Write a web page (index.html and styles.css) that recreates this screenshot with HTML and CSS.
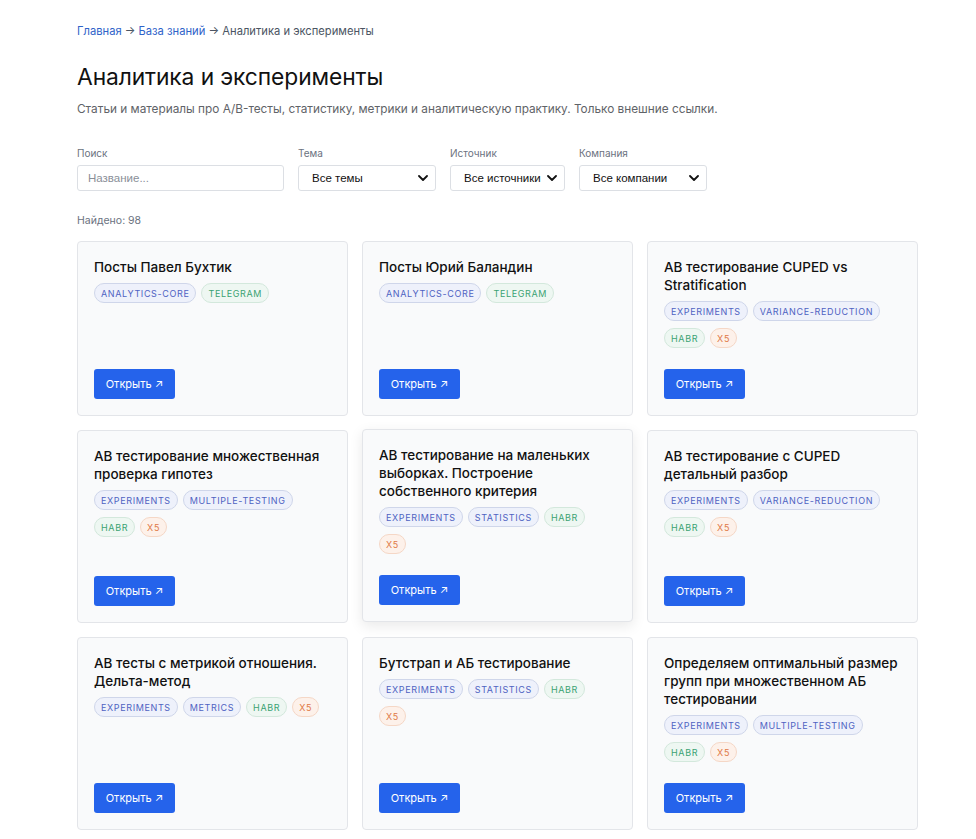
FILE: index.html
```html
<!DOCTYPE html>
<html lang="ru">
<head>
<meta charset="utf-8">
<title>Аналитика и эксперименты</title>
<link rel="stylesheet" href="styles.css">
</head>
<body>
<main class="page">
  <nav class="breadcrumb"><a href="#">Главная</a> → <a href="#">База знаний</a> → <span>Аналитика и эксперименты</span></nav>
  <h1 class="title">Аналитика и эксперименты</h1>
  <p class="subtitle">Статьи и материалы про A/B-тесты, статистику, метрики и аналитическую практику. Только внешние ссылки.</p>

  <div class="filters">
    <label class="field f-search"><span class="label">Поиск</span>
      <input class="input" type="text" placeholder="Название...">
    </label>
    <label class="field f-topic"><span class="label">Тема</span>
      <span class="select-wrap"><select class="select"><option>Все темы</option></select>
        <svg class="chev" viewBox="0 0 10 6" width="10" height="6"><path d="M1 1l4 4 4-4" fill="none" stroke="#111" stroke-width="1.8" stroke-linecap="round" stroke-linejoin="round"/></svg></span>
    </label>
    <label class="field f-source"><span class="label">Источник</span>
      <span class="select-wrap"><select class="select"><option>Все источники</option></select>
        <svg class="chev" viewBox="0 0 10 6" width="10" height="6"><path d="M1 1l4 4 4-4" fill="none" stroke="#111" stroke-width="1.8" stroke-linecap="round" stroke-linejoin="round"/></svg></span>
    </label>
    <label class="field f-company"><span class="label">Компания</span>
      <span class="select-wrap"><select class="select"><option>Все компании</option></select>
        <svg class="chev" viewBox="0 0 10 6" width="10" height="6"><path d="M1 1l4 4 4-4" fill="none" stroke="#111" stroke-width="1.8" stroke-linecap="round" stroke-linejoin="round"/></svg></span>
    </label>
  </div>

  <p class="found">Найдено: 98</p>

  <section class="grid">
    <article class="card">
      <h3 class="card-title">Посты Павел Бухтик</h3>
      <div class="tags"><span class="tag blue">ANALYTICS-CORE</span><span class="tag green">TELEGRAM</span></div>
      <a class="btn" href="#">Открыть ↗</a>
    </article>
    <article class="card">
      <h3 class="card-title">Посты Юрий Баландин</h3>
      <div class="tags"><span class="tag blue">ANALYTICS-CORE</span><span class="tag green">TELEGRAM</span></div>
      <a class="btn" href="#">Открыть ↗</a>
    </article>
    <article class="card">
      <h3 class="card-title">AB тестирование CUPED vs Stratification</h3>
      <div class="tags"><span class="tag blue">EXPERIMENTS</span><span class="tag blue">VARIANCE-REDUCTION</span><span class="tag green">HABR</span><span class="tag orange">X5</span></div>
      <a class="btn" href="#">Открыть ↗</a>
    </article>
    <article class="card">
      <h3 class="card-title">AB тестирование множественная проверка гипотез</h3>
      <div class="tags"><span class="tag blue">EXPERIMENTS</span><span class="tag blue">MULTIPLE-TESTING</span><span class="tag green">HABR</span><span class="tag orange">X5</span></div>
      <a class="btn" href="#">Открыть ↗</a>
    </article>
    <article class="card hover">
      <h3 class="card-title">AB тестирование на маленьких выборках. Построение собственного критерия</h3>
      <div class="tags"><span class="tag blue">EXPERIMENTS</span><span class="tag blue">STATISTICS</span><span class="tag green">HABR</span><span class="tag orange">X5</span></div>
      <a class="btn" href="#">Открыть ↗</a>
    </article>
    <article class="card">
      <h3 class="card-title">AB тестирование с CUPED детальный разбор</h3>
      <div class="tags"><span class="tag blue">EXPERIMENTS</span><span class="tag blue">VARIANCE-REDUCTION</span><span class="tag green">HABR</span><span class="tag orange">X5</span></div>
      <a class="btn" href="#">Открыть ↗</a>
    </article>
    <article class="card">
      <h3 class="card-title">AB тесты с метрикой отношения. Дельта-метод</h3>
      <div class="tags"><span class="tag blue">EXPERIMENTS</span><span class="tag blue">METRICS</span><span class="tag green">HABR</span><span class="tag orange">X5</span></div>
      <a class="btn" href="#">Открыть ↗</a>
    </article>
    <article class="card">
      <h3 class="card-title">Бутстрап и АБ тестирование</h3>
      <div class="tags"><span class="tag blue">EXPERIMENTS</span><span class="tag blue">STATISTICS</span><span class="tag green">HABR</span><span class="tag orange">X5</span></div>
      <a class="btn" href="#">Открыть ↗</a>
    </article>
    <article class="card">
      <h3 class="card-title">Определяем оптимальный размер групп при множественном АБ тестировании</h3>
      <div class="tags"><span class="tag blue">EXPERIMENTS</span><span class="tag blue">MULTIPLE-TESTING</span><span class="tag green">HABR</span><span class="tag orange">X5</span></div>
      <a class="btn" href="#">Открыть ↗</a>
    </article>
  </section>
</main>
</body>
</html>
```

FILE: styles.css
```css
* { box-sizing: border-box; }

html, body {
  margin: 0;
  padding: 0;
  background: #ffffff;
}

body {
  font-family: Inter, "Noto Sans", "Liberation Sans", sans-serif;
  color: #111827;
}

.page {
  width: 841px;
  margin-left: 77px;
  padding-top: 23px;
}

.breadcrumb {
  font-size: 11.2px;
  line-height: 16px;
  color: #4b5563;
}

.breadcrumb a {
  color: #2f63c9;
  text-decoration: none;
}

.title {
  margin: 24px 0 0;
  font-size: 22.8px;
  line-height: 28px;
  font-weight: 400;
  color: #111111;
  letter-spacing: -0.1px;
}

.subtitle {
  margin: 10px 0 0;
  font-size: 11.8px;
  line-height: 16px;
  color: #5f6368;
}

.filters {
  display: flex;
  gap: 14px;
  margin-top: 29px;
}

.field {
  display: flex;
  flex-direction: column;
  gap: 5px;
}

.label {
  font-size: 10px;
  line-height: 14px;
  color: #6b7280;
}

.f-search { width: 207px; }
.f-topic { width: 138px; }
.f-source { width: 115px; }
.f-company { width: 128px; }

.input,
.select {
  width: 100%;
  height: 26px;
  border: 1px solid #dcdfe4;
  border-radius: 3px;
  background: #ffffff;
  font-family: "Liberation Sans", Arial, sans-serif;
  font-size: 11.5px;
  color: #111111;
}

.input {
  padding: 0 10px;
}

.input::placeholder {
  color: #8a8f98;
}

.select-wrap {
  position: relative;
  display: block;
}

.select {
  appearance: none;
  -webkit-appearance: none;
  padding: 0 22px 0 13px;
}

.chev {
  position: absolute;
  right: 8px;
  top: 10px;
  pointer-events: none;
}

.found {
  margin: 23px 0 0;
  font-size: 10.5px;
  line-height: 14px;
  color: #6b7280;
}

.grid {
  display: grid;
  grid-template-columns: repeat(3, 1fr);
  gap: 14px;
  margin-top: 13px;
}

.card {
  display: flex;
  flex-direction: column;
  align-items: flex-start;
  background: #f9fafb;
  border: 1px solid #e3e5e9;
  border-radius: 4px;
  padding: 16px 16px 16px;
}

.card.hover {
  transform: translateY(-1px);
  box-shadow: 0 4px 14px rgba(0, 0, 0, 0.09);
}

.card-title {
  margin: 0;
  font-size: 13.5px;
  line-height: 18px;
  font-weight: 500;
  color: #111111;
}

.tags {
  display: flex;
  flex-wrap: wrap;
  gap: 7px 5px;
  margin-top: 7px;
  margin-bottom: 21px;
}

.tag {
  display: inline-flex;
  align-items: center;
  height: 20px;
  padding: 0 6px;
  border: 1px solid;
  border-radius: 10px;
  font-size: 9px;
  letter-spacing: 0.07em;
  font-weight: 400;
}

.tag.blue {
  background: #eef1fb;
  border-color: #cfd6ea;
  color: #4f63c2;
}

.tag.green {
  background: #eef7f2;
  border-color: #d3e8dc;
  color: #3aa272;
}

.tag.orange {
  background: #fdf1ea;
  border-color: #f5d7c6;
  color: #e07844;
}

.btn {
  margin-top: auto;
  display: inline-flex;
  align-items: center;
  justify-content: center;
  width: 81px;
  height: 30px;
  background: #2563eb;
  color: #ffffff;
  border-radius: 3px;
  font-size: 11px;
  text-decoration: none;
}
```
